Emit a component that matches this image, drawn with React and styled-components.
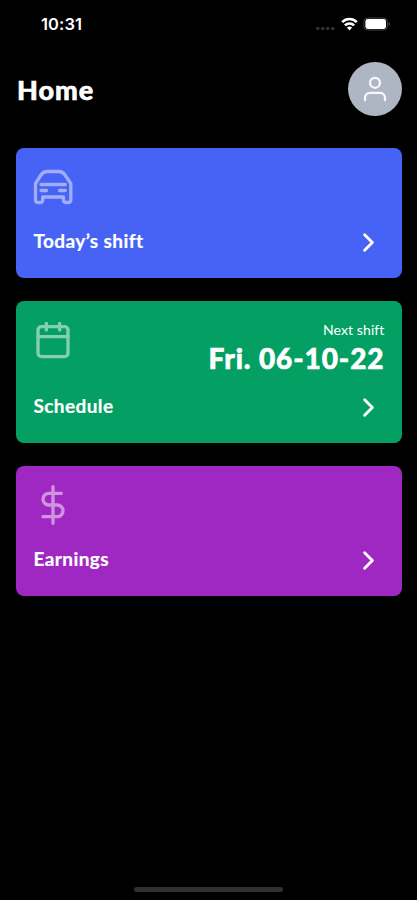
import React from "react";
import styled, { createGlobalStyle } from "styled-components";

const GlobalStyle = createGlobalStyle`
  * { box-sizing: border-box; }
  html, body { margin: 0; background: #000; }
  body { font-family: Lato, "Noto Sans", sans-serif; color: #fff; }
`;

const Screen = styled.div`
  width: 417px;
  height: 900px;
  display: flex;
  flex-direction: column;
  background: #000;
  overflow: hidden;
`;

const StatusBar = styled.div`
  height: 62px;
  padding: 14px 26px 0 41px;
  display: flex;
  justify-content: space-between;
  align-items: flex-start;
`;

const Clock = styled.time`
  font: 600 16.5px/20px Inter, "Liberation Sans", sans-serif;
  letter-spacing: 0.1px;
`;

const StatusIcons = styled.svg`
  display: block;
  width: 76px;
  height: 20px;
`;

const Header = styled.header`
  height: 54px;
  padding: 0 15px 0 17px;
  display: flex;
  justify-content: space-between;
  align-items: center;
`;

const Title = styled.h1`
  margin: 0;
  padding-top: 2px;
  font-size: 27px;
  line-height: 32px;
  font-weight: 900;
  letter-spacing: 1px;
  -webkit-text-stroke: 0.6px currentColor;
`;

const Avatar = styled.div`
  width: 54px;
  height: 54px;
  border-radius: 50%;
  background: #adb6c2;
  color: #f6f8ff;
  display: grid;
  place-items: center;
`;

const Cards = styled.main`
  padding: 32px 15.5px 0 16px;
  display: flex;
  flex-direction: column;
  gap: 23px;
  flex: 1;
`;

const Card = styled.section`
  height: ${(p) => p.$height}px;
  border-radius: 8px;
  background: ${(p) => p.$color};
  padding: 19px 17px 21px 17px;
  display: flex;
  flex-direction: column;
  justify-content: space-between;
`;

const CardRow = styled.div`
  display: flex;
  justify-content: space-between;
  align-items: ${(p) => p.$align || "center"};
`;

const Icon = styled.svg`
  display: block;
  width: ${(p) => p.$size}px;
  height: ${(p) => p.$size}px;
  fill: none;
  stroke: currentColor;
  stroke-width: ${(p) => p.$stroke || 2};
  stroke-linecap: round;
  stroke-linejoin: round;
  opacity: ${(p) => p.$opacity || 1};
`;

const Chevron = styled(Icon)`
  margin: 1px 1px -1px 0;
`;

const Label = styled.span`
  padding: 0 0 2px 0.5px;
  font-size: 19px;
  line-height: 26px;
  font-weight: 700;
  letter-spacing: 0.4px;
  -webkit-text-stroke: 0.2px currentColor;
`;

const NextShift = styled.div`
  display: flex;
  flex-direction: column;
  align-items: flex-end;
  height: 40px;
  padding-top: 1px;
`;

const Caption = styled.span`
  font-size: 14px;
  line-height: 18px;
  letter-spacing: 0.1px;
`;

const ShiftDate = styled.strong`
  font-size: 28px;
  line-height: 38px;
  font-weight: 900;
  white-space: nowrap;
  letter-spacing: 0.9px;
  -webkit-text-stroke: 0.6px currentColor;
`;

const HomeArea = styled.footer`
  height: 13px;
  display: flex;
  justify-content: center;
`;

const HomeIndicator = styled.div`
  width: 149px;
  height: 5px;
  border-radius: 3px;
  background: #303030;
`;

const CarIcon = () => (
  <Icon viewBox="0 0 40 40" $size={40} $stroke={3.3} $opacity={0.48}>
    <path d="M2.5 16.5 L8 8 Q10.5 4.5 14 4.5 H26 Q29.5 4.5 32 8 L37.8 16.5 V33 Q37.8 35.5 35 35.5 H33 Q30.5 35.5 30.5 33 V30 H9.7 V33 Q9.7 35.5 7.2 35.5 H5 Q2.5 35.5 2.5 33 Z" />
    <path d="M8 17.5H32.3M8 23.5H13.5M26.5 23.5H32.3" />
  </Icon>
);

const CalendarIcon = () => (
  <Icon viewBox="0 0 24 24" $size={40} $opacity={0.5}>
    <rect x="3" y="4" width="18" height="18" rx="2" />
    <path d="M16 2v4M8 2v4M3 10h18" />
  </Icon>
);

const DollarIcon = () => (
  <Icon viewBox="0 0 24 24" $size={40} $opacity={0.5}>
    <path d="M12 1v22M17 5H9.5a3.5 3.5 0 0 0 0 7h5a3.5 3.5 0 0 1 0 7H6" />
  </Icon>
);

const MenuCard = ({ color, height, icon, label, children }) => (
  <Card $color={color} $height={height}>
    <CardRow $align="flex-start">
      {icon}
      {children}
    </CardRow>
    <CardRow>
      <Label>{label}</Label>
      <Chevron viewBox="0 0 24 24" $size={31} $stroke={2.2}>
        <path d="m9 18 6-6-6-6" />
      </Chevron>
    </CardRow>
  </Card>
);

export default function App() {
  return (
    <>
      <GlobalStyle />
      <Screen>
        <StatusBar>
          <Clock>10:31</Clock>
          <StatusIcons viewBox="0 0 76 20">
            <g fill="#303030">
              <rect x="1" y="13" width="3.5" height="3" rx="1" />
              <rect x="6" y="13" width="3.5" height="3" rx="1" />
              <rect x="11" y="13" width="3.5" height="3" rx="1" />
              <rect x="16" y="13" width="3.5" height="3" rx="1" />
            </g>
            <g fill="none" stroke="#fff" strokeWidth="2.6">
              <path d="M27.2 8.1a10.3 10.3 0 0 1 14.6 0" />
              <path d="M29.9 11.4a6.5 6.5 0 0 1 9.2 0" />
            </g>
            <path fill="#fff" d="M31.9 13.6a3.8 3.8 0 0 1 5.2 0L34.5 16.6Z" />
            <rect x="48.9" y="4" width="23.4" height="12" rx="3.5" fill="none" stroke="#444" />
            <rect x="50.4" y="5.1" width="20.6" height="9.8" rx="2.3" fill="#fff" />
            <path d="M73.6 8v4q1.4-.6 1.4-2T73.6 8" fill="#555" />
          </StatusIcons>
        </StatusBar>
        <Header>
          <Title>Home</Title>
          <Avatar>
            <Icon viewBox="0 0 24 24" $size={30} $stroke={1.8}>
              <path d="M20 21v-2a4 4 0 0 0-4-4H8a4 4 0 0 0-4 4v2" />
              <circle cx="12" cy="7" r="4" />
            </Icon>
          </Avatar>
        </Header>
        <Cards>
          <MenuCard color="#4763f6" height={130} icon={<CarIcon />} label="Today’s shift" />
          <MenuCard color="#049f63" height={142} icon={<CalendarIcon />} label="Schedule">
            <NextShift>
              <Caption>Next shift</Caption>
              <ShiftDate>Fri. 06-10-22</ShiftDate>
            </NextShift>
          </MenuCard>
          <MenuCard color="#a028c2" height={130} icon={<DollarIcon />} label="Earnings" />
        </Cards>
        <HomeArea>
          <HomeIndicator />
        </HomeArea>
      </Screen>
    </>
  );
}
